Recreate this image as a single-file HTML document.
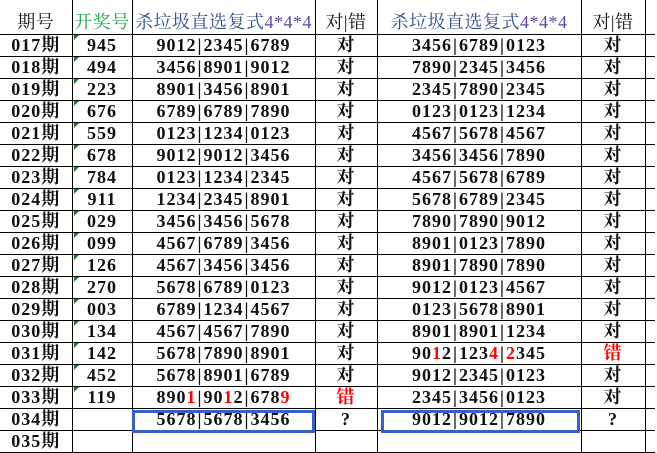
<!DOCTYPE html>
<html><head><meta charset="utf-8"><style>
body{margin:0;width:657px;height:445px;overflow:hidden;background:#fff;font-family:"Liberation Serif","Noto Serif CJK SC",serif;}
table{position:absolute;left:0;top:0;border-collapse:collapse;table-layout:fixed;}
td{height:21px;padding:0;border-bottom:1px solid #000;border-right:1px solid #000;text-align:center;font-size:18px;font-weight:bold;color:#111;white-space:nowrap;overflow:hidden;line-height:21px;position:relative;letter-spacing:1px;}
td.n i{font-style:normal;margin:0 1px}
tr.h td{height:34px;vertical-align:bottom;line-height:24px;letter-spacing:0.5px;font-weight:normal}
td.l{border-right:none}
.r{color:#f00}
.g{color:#1aa34a}
.b{color:#2e4d8c}
.p{color:#5b4aa0}
.tri::before{content:"";position:absolute;left:1px;top:0;border-top:5px solid #1a7a2a;border-right:5px solid transparent;}
.box{position:absolute;border:3px solid #3a5fcd;}
</style></head><body>
<table>
<col style="width:72px"><col style="width:60px"><col style="width:183px"><col style="width:62px"><col style="width:204px"><col style="width:64px"><col style="width:10px">
<tr class="h"><td>期号</td><td class="g">开奖号</td><td class="b">杀垃圾直选复式<span class="p">4*4*4</span></td><td>对|错</td><td class="b">杀垃圾直选复式<span class="p">4*4*4</span></td><td>对|错</td><td class="l"></td></tr>
<tr><td>017期</td><td class="tri">945</td><td class="n">9012<i>|</i>2345<i>|</i>6789</td><td>对</td><td class="n">3456<i>|</i>6789<i>|</i>0123</td><td>对</td><td class="l"></td></tr>
<tr><td>018期</td><td class="tri">494</td><td class="n">3456<i>|</i>8901<i>|</i>9012</td><td>对</td><td class="n">7890<i>|</i>2345<i>|</i>3456</td><td>对</td><td class="l"></td></tr>
<tr><td>019期</td><td class="tri">223</td><td class="n">8901<i>|</i>3456<i>|</i>8901</td><td>对</td><td class="n">2345<i>|</i>7890<i>|</i>2345</td><td>对</td><td class="l"></td></tr>
<tr><td>020期</td><td class="tri">676</td><td class="n">6789<i>|</i>6789<i>|</i>7890</td><td>对</td><td class="n">0123<i>|</i>0123<i>|</i>1234</td><td>对</td><td class="l"></td></tr>
<tr><td>021期</td><td class="tri">559</td><td class="n">0123<i>|</i>1234<i>|</i>0123</td><td>对</td><td class="n">4567<i>|</i>5678<i>|</i>4567</td><td>对</td><td class="l"></td></tr>
<tr><td>022期</td><td class="tri">678</td><td class="n">9012<i>|</i>9012<i>|</i>3456</td><td>对</td><td class="n">3456<i>|</i>3456<i>|</i>7890</td><td>对</td><td class="l"></td></tr>
<tr><td>023期</td><td class="tri">784</td><td class="n">0123<i>|</i>1234<i>|</i>2345</td><td>对</td><td class="n">4567<i>|</i>5678<i>|</i>6789</td><td>对</td><td class="l"></td></tr>
<tr><td>024期</td><td class="tri">911</td><td class="n">1234<i>|</i>2345<i>|</i>8901</td><td>对</td><td class="n">5678<i>|</i>6789<i>|</i>2345</td><td>对</td><td class="l"></td></tr>
<tr><td>025期</td><td class="tri">029</td><td class="n">3456<i>|</i>3456<i>|</i>5678</td><td>对</td><td class="n">7890<i>|</i>7890<i>|</i>9012</td><td>对</td><td class="l"></td></tr>
<tr><td>026期</td><td class="tri">099</td><td class="n">4567<i>|</i>6789<i>|</i>3456</td><td>对</td><td class="n">8901<i>|</i>0123<i>|</i>7890</td><td>对</td><td class="l"></td></tr>
<tr><td>027期</td><td class="tri">126</td><td class="n">4567<i>|</i>3456<i>|</i>3456</td><td>对</td><td class="n">8901<i>|</i>7890<i>|</i>7890</td><td>对</td><td class="l"></td></tr>
<tr><td>028期</td><td class="tri">270</td><td class="n">5678<i>|</i>6789<i>|</i>0123</td><td>对</td><td class="n">9012<i>|</i>0123<i>|</i>4567</td><td>对</td><td class="l"></td></tr>
<tr><td>029期</td><td class="tri">003</td><td class="n">6789<i>|</i>1234<i>|</i>4567</td><td>对</td><td class="n">0123<i>|</i>5678<i>|</i>8901</td><td>对</td><td class="l"></td></tr>
<tr><td>030期</td><td class="tri">134</td><td class="n">4567<i>|</i>4567<i>|</i>7890</td><td>对</td><td class="n">8901<i>|</i>8901<i>|</i>1234</td><td>对</td><td class="l"></td></tr>
<tr><td>031期</td><td class="tri">142</td><td class="n">5678<i>|</i>7890<i>|</i>8901</td><td>对</td><td class="n">90<span class="r">1</span>2<i>|</i>123<span class="r">4</span><i>|</i><span class="r">2</span>345</td><td class="r">错</td><td class="l"></td></tr>
<tr><td>032期</td><td class="tri">452</td><td class="n">5678<i>|</i>8901<i>|</i>6789</td><td>对</td><td class="n">9012<i>|</i>2345<i>|</i>0123</td><td>对</td><td class="l"></td></tr>
<tr><td>033期</td><td class="tri">119</td><td class="n">890<span class="r">1</span><i>|</i>90<span class="r">1</span>2<i>|</i>678<span class="r">9</span></td><td class="r">错</td><td class="n">2345<i>|</i>3456<i>|</i>0123</td><td>对</td><td class="l"></td></tr>
<tr><td>034期</td><td></td><td class="n">5678<i>|</i>5678<i>|</i>3456</td><td>?</td><td class="n">9012<i>|</i>9012<i>|</i>7890</td><td>?</td><td class="l"></td></tr>
<tr><td>035期</td><td></td><td></td><td></td><td></td><td></td><td class="l"></td></tr>
</table>
<div class="box" style="left:132px;top:410px;width:177px;height:17px"></div>
<div class="box" style="left:381px;top:410px;width:193px;height:17px"></div>
</body></html>
